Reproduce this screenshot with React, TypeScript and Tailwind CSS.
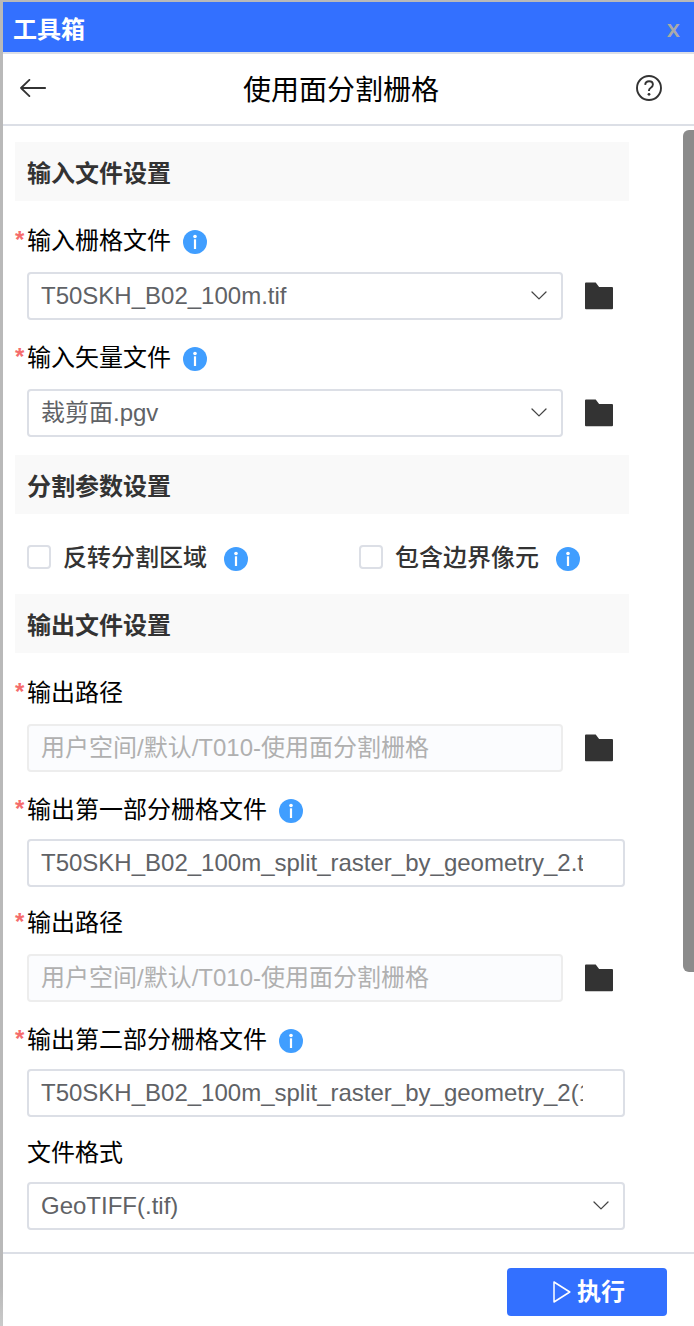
import { useState } from 'react'
import type { ReactNode } from 'react'
import clsx from 'clsx'

function BackIcon() {
  return (
    <svg className="w-[26px] h-[18px]" viewBox="0 0 26 18" fill="none" stroke="#333" strokeWidth="1.8" strokeLinecap="round" strokeLinejoin="round">
      <path d="M25.2 9H1M9.4 0.9L1 9l8.4 8.1" />
    </svg>
  )
}

function HelpIcon() {
  return (
    <svg className="w-[26px] h-[26px]" viewBox="0 0 26 26" fill="none" stroke="#333" strokeWidth="1.9">
      <circle cx="13" cy="13" r="12" />
      <path d="M9.2 9.9c.1-2.3 1.6-3.7 3.9-3.7 2.2 0 3.8 1.4 3.8 3.4 0 1.5-.8 2.3-2.1 3.1-1.5 1-1.9 1.6-1.9 3.2" />
      <circle cx="13" cy="19.3" r="1.4" fill="#333" stroke="none" />
    </svg>
  )
}

function InfoIcon() {
  return (
    <svg className="w-6 h-6 shrink-0" viewBox="0 0 24 24">
      <circle cx="12" cy="12" r="12" fill="#409eff" />
      <circle cx="12" cy="6.5" r="1.8" fill="#fff" />
      <path d="M12 9.3v9.7" stroke="#fff" strokeWidth="2.2" />
    </svg>
  )
}

function ChevronIcon() {
  return (
    <svg className="w-4 h-[9px] mb-0.5 shrink-0" viewBox="0 0 16 9" fill="none" stroke="#444" strokeWidth="1.3" strokeLinecap="round" strokeLinejoin="round">
      <path d="M1 1l7 6.9L15 1" />
    </svg>
  )
}

function FolderIcon() {
  return (
    <svg className="w-7 h-7" viewBox="0 0 28 28" fill="#333">
      <path d="M1 .6h9.7l3.4 4.5H27a1 1 0 0 1 1 1v20.2a1 1 0 0 1-1 1H1a1 1 0 0 1-1-1V1.6a1 1 0 0 1 1-1z" />
    </svg>
  )
}

function PlayIcon() {
  return (
    <svg className="w-[18px] h-[22px]" viewBox="0 0 18 22" fill="none" stroke="#fff" strokeWidth="1.5" strokeLinejoin="round">
      <path d="M1 1v20l15.8-10z" />
    </svg>
  )
}

function SectionTitle({ className, children }: { className?: string; children: ReactNode }) {
  return (
    <h2 className={clsx('flex items-center h-[59px] w-[614px] pl-3 pt-1 bg-[#f9f9f9] text-2xl font-bold text-[#333]', className)}>
      {children}
    </h2>
  )
}

interface FieldProps {
  label: string
  required?: boolean
  info?: boolean
  className?: string
  children: ReactNode
}

function Field({ label, required = true, info, className, children }: FieldProps) {
  return (
    <div className={clsx('w-[610px]', className)}>
      <div className="flex items-center h-8 text-2xl text-black">
        <span className="w-3 h-8 leading-[30px] font-bold text-[#f56c6c]">{required && '*'}</span>
        <span className="mr-3 leading-8">{label}</span>
        {info && <span className="pt-0.5"><InfoIcon /></span>}
      </div>
      {children}
    </div>
  )
}

interface BoxProps {
  value: string
  select?: boolean
  folder?: boolean
  disabled?: boolean
  className?: string
}

function Box({ value, select, folder, disabled, className }: BoxProps) {
  return (
    <div className={clsx('flex items-center pl-3', className)}>
      <div
        className={clsx(
          'flex items-center h-12 pl-3 border-2 rounded text-2xl',
          folder ? 'w-[536px]' : 'w-[598px]',
          select ? 'pr-3.5' : 'pr-10',
          disabled ? 'bg-[#fbfcfe] border-[#ededed] text-[#b0b0b0]' : 'bg-white border-[#dcdfe6] text-[#606266]'
        )}
      >
        <span className="flex-1 overflow-hidden whitespace-nowrap leading-8">{value}</span>
        {select && <ChevronIcon />}
      </div>
      {folder && (
        <button className="ml-[22px]">
          <FolderIcon />
        </button>
      )}
    </div>
  )
}

function CheckItem({ label }: { label: string }) {
  const [checked, setChecked] = useState(false)
  return (
    <div className="flex items-center h-8">
      <button
        onClick={() => setChecked(!checked)}
        className={clsx('w-6 h-6 border-2 rounded', checked ? 'bg-[#409eff] border-[#409eff]' : 'bg-white border-[#dcdfe6]')}
      />
      <span className="ml-3 mr-[17px] pt-px text-2xl leading-8 font-medium text-[#333]">{label}</span>
      <span className="pt-1"><InfoIcon /></span>
    </div>
  )
}

export default function App() {
  return (
    <div className="w-[694px] h-[1326px] pl-[3px] pt-0.5 overflow-hidden bg-linear-to-b from-[#b9b9b9] via-[#b9b9b9] via-97% to-[#cacaca] font-['Liberation_Sans','Noto_Sans_CJK_SC',sans-serif]">
      <div className="flex flex-col h-full bg-white">
        <header className="flex items-center justify-between h-[52px] pl-2.5 pr-3.5 bg-[#3370ff] border-b-2 border-[#dcdfe6]">
          <span className="pt-1.5 text-2xl font-bold text-white">工具箱</span>
          <button className="pt-0.5 text-2xl font-['Open_Sans',sans-serif] font-semibold text-[#aaa]">x</button>
        </header>

        <div className="flex items-center justify-between h-[72px] pl-[17px] pr-8 border-b-2 border-[#dcdfe6]">
          <button className="pb-0.5"><BackIcon /></button>
          <h1 className="pt-1 text-[28px] text-black">使用面分割栅格</h1>
          <button className="pb-0.5"><HelpIcon /></button>
        </div>

        <div className="flex justify-between h-[1126px]">
          <main className="w-[626px] pl-3 pt-4">
            <SectionTitle>输入文件设置</SectionTitle>
            <Field label="输入栅格文件" info className="mt-6">
              <Box value="T50SKH_B02_100m.tif" select folder className="mt-[15px]" />
            </Field>
            <Field label="输入矢量文件" info className="mt-[22px]">
              <Box value="裁剪面.pgv" select folder className="mt-[15px]" />
            </Field>

            <SectionTitle className="mt-[18px]">分割参数设置</SectionTitle>
            <div className="flex gap-[111px] h-20 pl-3 pt-[27px]">
              <CheckItem label="反转分割区域" />
              <CheckItem label="包含边界像元" />
            </div>

            <SectionTitle>输出文件设置</SectionTitle>
            <Field label="输出路径" className="mt-6">
              <Box value="用户空间/默认/T010-使用面分割栅格" folder disabled className="mt-[15px]" />
            </Field>
            <Field label="输出第一部分栅格文件" info className="mt-[22px]">
              <Box value="T50SKH_B02_100m_split_raster_by_geometry_2.tif" className="mt-[13px]" />
            </Field>
            <Field label="输出路径" className="mt-5">
              <Box value="用户空间/默认/T010-使用面分割栅格" folder disabled className="mt-[15px]" />
            </Field>
            <Field label="输出第二部分栅格文件" info className="mt-[22px]">
              <Box value="T50SKH_B02_100m_split_raster_by_geometry_2(1).tif" className="mt-[13px]" />
            </Field>
            <Field label="文件格式" required={false} className="mt-5">
              <Box value="GeoTIFF(.tif)" select className="mt-[13px]" />
            </Field>
          </main>
          <div className="shrink-0 w-[11px] h-[842px] mt-1 rounded-l-md bg-[#8b8b8b]" />
        </div>

        <footer className="flex justify-end h-[74px] pt-3.5 pr-[27px] border-t-2 border-[#dcdfe6]">
          <button className="flex items-center justify-center gap-1.5 w-40 h-12 pl-1 rounded bg-[#3370ff] text-2xl font-bold text-white">
            <PlayIcon />
            <span>执行</span>
          </button>
        </footer>
      </div>
    </div>
  )
}
